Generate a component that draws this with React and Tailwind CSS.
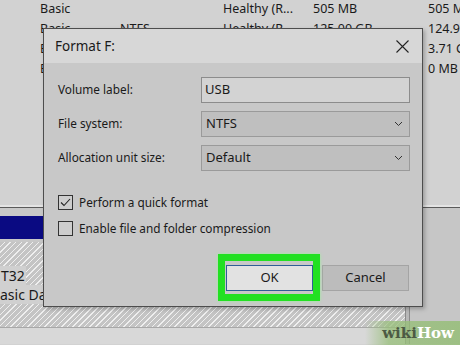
import React from 'react';

const rows = [
  ['Basic', '', 'Healthy (R...', '505 MB', '505 M'],
  ['Basic', 'NTFS', 'Healthy (R...', '125.00 GB', '124.9'],
  ['Basic', '', '', '', '3.71 G'],
  ['Basic', '', '', '', '0 MB'],
];

const Chevron = () => (
  <svg width="9" height="6" viewBox="0 0 9 6" className="shrink-0">
    <path d="M1 1 L4.5 4.5 L8 1" fill="none" stroke="#333" strokeWidth="1" />
  </svg>
);

const Checkbox = ({ checked, label }) => (
  <div className="flex items-center gap-[6px] h-[15px]">
    <div className="w-[15px] h-[15px] border border-[#333] bg-[#cdcdcd] flex items-center justify-center">
      {checked && (
        <svg width="11" height="9" viewBox="0 0 11 9">
          <path d="M1 4.5 L4 7.5 L10 1" fill="none" stroke="#222" strokeWidth="1.1" />
        </svg>
      )}
    </div>
    <span>{label}</span>
  </div>
);

const App = () => {
  return (
    <div className="relative w-[460px] h-[345px] overflow-hidden bg-[#d2d2d2] text-[#1a1a1a] font-['Noto_Sans',sans-serif] text-[11.8px]">
      {/* disk list behind the dialog */}
      <div className="flex flex-col h-[208px] -mt-[1px] text-[12.5px]">
        {rows.map((r, i) => (
          <div key={i} className="flex h-[20px] items-center leading-none pl-[40px] whitespace-nowrap">
            <span className="w-[80px] shrink-0">{r[0]}</span>
            <span className="w-[103px] shrink-0">{r[1]}</span>
            <span className="w-[90px] shrink-0">{r[2]}</span>
            <span className="w-[115px] shrink-0">{r[3]}</span>
            <span>{r[4]}</span>
          </div>
        ))}
        <div className="flex-1" />
        <div className="h-[2px] bg-[#e4e4e4]" />
      </div>
      <div className="h-px bg-[#5a5a5a]" />
      <div className="flex h-[136px]">
        <div className="w-[405px] flex flex-col">
          <div className="h-[8px] bg-[#c8c8c8]" />
          <div className="h-[23px] bg-[#0a0a82]" />
          <div className="h-[3px] bg-[#c8c8c8]" />
          <div className="h-[85px] bg-[repeating-linear-gradient(135deg,#c4c4c4_0px,#c4c4c4_3px,#efefef_3px,#efefef_4px)] flex flex-col pt-[24px] text-[14px]">
            <div className="self-start bg-[#d0d0d0] px-[1px] h-[19px] leading-[19px]">T32</div>
            <div className="self-start bg-[#d0d0d0] h-[19px] leading-[19px]">asic Dat</div>
          </div>
          <div className="flex-1 bg-[#d8d8d8] border-t border-[#a8a8a8]" />
        </div>
        <div className="w-[5px] bg-[#b8b8b8] border-x border-[#8a8a8a]" />
        <div className="flex-1 bg-[#c6c6c6]" />
      </div>

      {/* Format dialog */}
      <div className="absolute left-[43px] top-[28px] w-[380px] h-[279px] border border-[#4d4d4d] bg-[#c8c8c8] shadow-[2px_2px_4px_rgba(0,0,0,0.25)] flex flex-col">
        <div className="h-[34px] bg-[#d7d7d7] flex items-center justify-between pl-[11px] pr-[13px] text-[13.5px]">
          <span>Format F:</span>
          <svg width="13" height="13" viewBox="0 0 13 13">
            <path d="M0.5 0.5 L12.5 12.5 M12.5 0.5 L0.5 12.5" stroke="#222" strokeWidth="1.1" />
          </svg>
        </div>
        <div className="flex flex-col pl-[14px] pr-[12px] pt-[14px] flex-1">
          <div className="flex flex-col gap-[8px]">
            <div className="flex items-center h-[26px]">
              <span className="w-[143px]">Volume label:</span>
              <div className="flex-1 h-full border border-[#8c8c8c] bg-[#d3d3d3] px-[3px] flex items-center text-[13px]">USB</div>
            </div>
            <div className="flex items-center h-[26px]">
              <span className="w-[143px]">File system:</span>
              <div className="flex-1 h-full border border-[#9a9a9a] bg-[#bfbfbf] pl-[4px] pr-[6px] flex items-center justify-between text-[13px]">
                <span>NTFS</span>
                <Chevron />
              </div>
            </div>
            <div className="flex items-center h-[26px]">
              <span className="w-[143px]">Allocation unit size:</span>
              <div className="flex-1 h-full border border-[#9a9a9a] bg-[#bfbfbf] pl-[4px] pr-[6px] flex items-center justify-between text-[13px]">
                <span>Default</span>
                <Chevron />
              </div>
            </div>
          </div>
          <div className="flex flex-col gap-[11px] mt-[24px]">
            <Checkbox checked label="Perform a quick format" />
            <Checkbox label="Enable file and folder compression" />
          </div>
          <div className="flex justify-end gap-[9px] mt-auto mb-[15px] pr-[1px]">
            <div className="relative w-[87px] h-[26px]">
              <div className="absolute -left-[8px] -top-[11px] -right-[7px] -bottom-[10px] border-[7px] border-[#22e022] shadow-[0_0_3px_#9cf09c]" />
              <div className="relative w-full h-full border border-[#2f5f96] bg-[#e2e2e2] flex items-center justify-center text-[13px]">OK</div>
            </div>
            <div className="w-[87px] h-[26px] border border-[#a4a4a4] bg-[#bcbcbc] flex items-center justify-center text-[13px]">Cancel</div>
          </div>
        </div>
      </div>

      {/* watermark */}
      <div className="absolute right-0 bottom-0 w-[95px] h-[24px] bg-[linear-gradient(90deg,rgba(150,190,120,0)_0%,rgba(150,190,120,0.75)_25%,rgba(150,190,120,0.85)_100%)] flex items-center justify-end pr-[6px] font-['DejaVu_Serif',serif] font-bold text-[15px] leading-none">
        <span className="text-[#4c5a44]">wiki</span>
        <span className="text-white">How</span>
      </div>
    </div>
  );
};

export default App;
